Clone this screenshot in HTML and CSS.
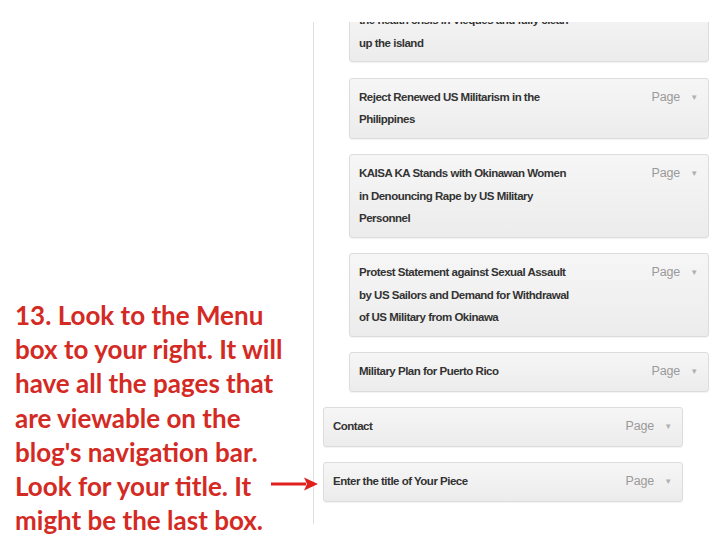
FILE: index.html
```html
<!DOCTYPE html>
<html lang="en">
<head>
  <meta charset="UTF-8" />
  <title>13. Look to the Menu box</title>
  <link rel="stylesheet" href="styles.css">
</head>
<body>
  <div class="slide">
    <div class="note">
      <p class="note-text">13. Look to the Menu<br>box to your right. It will<br>have all the pages that<br>are viewable on the<br>blog's navigation bar.<br>Look for your title. It<br>might be the last box.</p>
      <svg class="arrow" width="50" height="16" viewBox="0 0 50 16">
        <line x1="1" y1="8" x2="36" y2="8" stroke="#e0201c" stroke-width="3" />
        <polygon points="34,1.5 48,8 34,14.5 37,8" fill="#e0201c" />
      </svg>
    </div>

    <div class="menu">
      <ul class="items">
        <li class="sub">
          <div class="item">
            <span class="title">the health crisis in Vieques and fully clean<br>up the island</span>
          </div>
        </li>
        <li class="sub">
          <div class="item">
            <span class="title">Reject Renewed US Militarism in the<br>Philippines</span>
            <span class="type">Page <i class="caret">&#9660;</i></span>
          </div>
        </li>
        <li class="sub">
          <div class="item">
            <span class="title">KAISA KA Stands with Okinawan Women<br>in Denouncing Rape by US Military<br>Personnel</span>
            <span class="type">Page <i class="caret">&#9660;</i></span>
          </div>
        </li>
        <li class="sub">
          <div class="item">
            <span class="title">Protest Statement against Sexual Assault<br>by US Sailors and Demand for Withdrawal<br>of US Military from Okinawa</span>
            <span class="type">Page <i class="caret">&#9660;</i></span>
          </div>
        </li>
        <li class="sub">
          <div class="item">
            <span class="title">Military Plan for Puerto Rico</span>
            <span class="type">Page <i class="caret">&#9660;</i></span>
          </div>
        </li>
        <li>
          <div class="item">
            <span class="title">Contact</span>
            <span class="type">Page <i class="caret">&#9660;</i></span>
          </div>
        </li>
        <li>
          <div class="item">
            <span class="title">Enter the title of Your Piece</span>
            <span class="type">Page <i class="caret">&#9660;</i></span>
          </div>
        </li>
      </ul>
    </div>
  </div>
</body>
</html>
```

FILE: styles.css
```css
body {
  margin: 0;
  padding: 0;
  background: #fff;
  font-family: "Liberation Sans", Arial, sans-serif;
}

.slide {
  display: flex;
  width: 720px;
  height: 540px;
  overflow: hidden;
}

.note {
  width: 313px;
  flex-shrink: 0;
  position: relative;
}

.note-text {
  margin: 0;
  padding: 298px 0 0 15px;
  font-family: Lato, "Open Sans", sans-serif;
  font-weight: bold;
  font-size: 26px;
  line-height: 34.2px;
  color: #d42a24;
  white-space: nowrap;
}

.arrow {
  position: absolute;
  left: 270px;
  top: 476px;
}

.menu {
  margin-top: 22px;
  height: 502px;
  flex: 1;
  border-left: 1px solid #dedede;
  overflow: hidden;
}

.items {
  list-style: none;
  margin: -21px 0 0 0;
  padding: 0 0 0 9px;
}

.items li {
  margin-bottom: 15.5px;
}

.items li.sub {
  padding-left: 26px;
}

.item {
  width: 339px;
  display: flex;
  justify-content: space-between;
  align-items: flex-start;
  padding: 7px 10px 7px 9px;
  border: 1px solid #dcdcdc;
  border-radius: 3px;
  background: linear-gradient(to bottom, #f6f6f6, #ececec);
  box-shadow: 0 1px 1px rgba(0, 0, 0, 0.05);
}

.title {
  font-size: 11.5px;
  font-weight: bold;
  line-height: 22.5px;
  letter-spacing: -0.5px;
  color: #333;
  white-space: nowrap;
}

.type {
  font-size: 12.5px;
  line-height: 22.5px;
  color: #9a9a9a;
  letter-spacing: -0.2px;
}

.caret {
  font-style: normal;
  font-size: 8px;
  color: #b0b0b0;
  margin-left: 7px;
  vertical-align: 1px;
}
```
